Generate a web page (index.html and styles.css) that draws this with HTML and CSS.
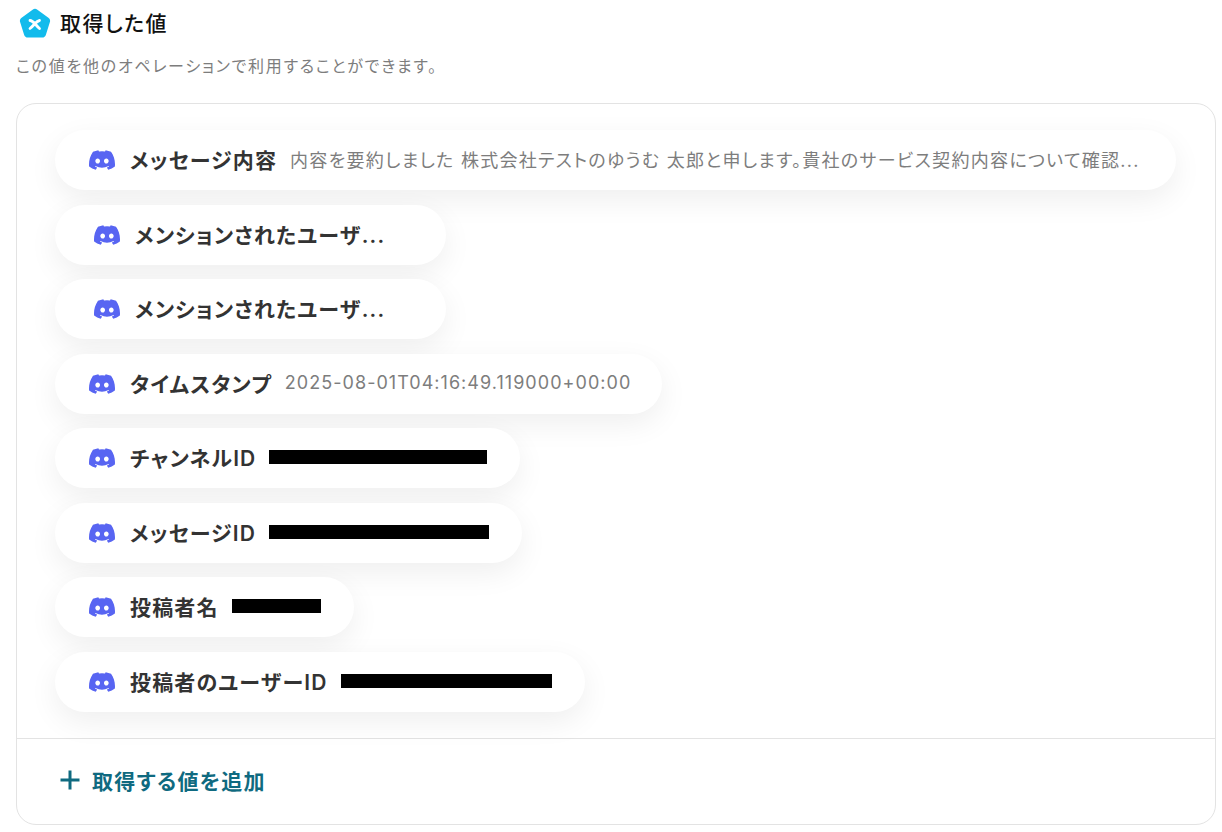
FILE: index.html
```html
<!DOCTYPE html>
<html lang="ja">
<head>
<meta charset="utf-8">
<title>取得した値</title>
<link rel="stylesheet" href="styles.css">
</head>
<body>
<svg class="defs" width="0" height="0" aria-hidden="true">
  <symbol id="discord" viewBox="0 0 127.14 96.36">
    <path fill="#5865f2" d="M107.7 8.07A105.15 105.15 0 0 0 81.47 0a72.06 72.06 0 0 0-3.36 6.83 97.68 97.68 0 0 0-29.11 0A72.37 72.37 0 0 0 45.64 0a105.89 105.89 0 0 0-26.25 8.09C2.79 32.65-1.71 56.6.54 80.21a105.73 105.73 0 0 0 32.17 16.15 77.7 77.7 0 0 0 6.89-11.11 68.42 68.42 0 0 1-10.85-5.18c.91-.66 1.8-1.34 2.66-2a75.57 75.57 0 0 0 64.32 0c.87.71 1.76 1.39 2.66 2a68.68 68.68 0 0 1-10.87 5.19 77 77 0 0 0 6.89 11.1 105.25 105.25 0 0 0 32.19-16.14c2.64-27.38-4.51-51.11-18.9-72.15ZM42.45 65.69C36.18 65.69 31 60 31 53s5-12.74 11.43-12.74S54 46 53.89 53s-5.05 12.69-11.44 12.69Zm42.24 0C78.41 65.69 73.25 60 73.25 53s5-12.74 11.44-12.74S96.23 46 96.12 53s-5.04 12.69-11.43 12.69Z"/>
  </symbol>
</svg>
<main class="page">
  <header class="heading">
    <svg class="logo" viewBox="0 0 32 32" aria-hidden="true">
      <path fill="#12bbec" d="M13.6 1.7a4 4 0 0 1 4.8 0l11 8a4 4 0 0 1 1.5 4.4l-4 12.600a4 4 0 0 1-3.900 2.800H9a4 4 0 0 1-3.900-2.800l-4-12.600a4 4 0 0 1 1.500-4.400Z"/>
      <path fill="none" stroke="#fff" stroke-width="2.8" stroke-linecap="round" d="M11 12.500c3.500 .2 5 4 9.500 8M20.500 12.500c-3.500 .5-4.500 4-9.500 8"/>
    </svg>
    <h1 class="title">取得した値</h1>
  </header>
  <p class="note">この値を他のオペレーションで利用することができます。</p>
  <section class="card">
    <ul class="pills">
      <li class="pill pill-full">
        <svg class="icon"><use href="#discord"/></svg>
        <span class="label">メッセージ内容</span>
        <span class="value value-long">内容を要約しました 株式会社テストのゆうむ 太郎と申します。貴社のサービス契約内容について確認...</span>
      </li>
      <li class="pill pill-short">
        <svg class="icon"><use href="#discord"/></svg>
        <span class="label">メンションされたユーザ...</span>
      </li>
      <li class="pill pill-short">
        <svg class="icon"><use href="#discord"/></svg>
        <span class="label">メンションされたユーザ...</span>
      </li>
      <li class="pill">
        <svg class="icon"><use href="#discord"/></svg>
        <span class="label">タイムスタンプ</span>
        <span class="value">2025-08-01T04:16:49.119000+00:00</span>
      </li>
      <li class="pill">
        <svg class="icon"><use href="#discord"/></svg>
        <span class="label">チャンネルID</span>
        <span class="redact redact-channel"></span>
      </li>
      <li class="pill">
        <svg class="icon"><use href="#discord"/></svg>
        <span class="label">メッセージID</span>
        <span class="redact redact-message"></span>
      </li>
      <li class="pill">
        <svg class="icon"><use href="#discord"/></svg>
        <span class="label">投稿者名</span>
        <span class="redact redact-author"></span>
      </li>
      <li class="pill">
        <svg class="icon"><use href="#discord"/></svg>
        <span class="label">投稿者のユーザーID</span>
        <span class="redact redact-user"></span>
      </li>
    </ul>
    <footer class="card-foot">
      <svg class="plus" viewBox="0 0 20 20" aria-hidden="true">
        <path fill="none" stroke="#0f6a80" stroke-width="3" d="M10 0.500V19.500M0.500 10H19.500"/>
      </svg>
      <span class="add">取得する値を追加</span>
    </footer>
  </section>
</main>
</body>
</html>
```

FILE: styles.css
```css
* { box-sizing: border-box; }
html, body { margin: 0; padding: 0; background: #fff; }
body {
  width: 1222px;
  height: 832px;
  overflow: hidden;
  font-family: "Inter", "Noto Sans CJK JP", sans-serif;
  font-feature-settings: "palt";
  color: #2b2b2b;
}
.defs { position: absolute; }
.page { padding: 8px 6px 0 16px; }
.heading { display: flex; align-items: center; gap: 9px; height: 32px; margin-left: 3px; }
.logo { width: 32px; height: 32px; flex: none; }
.title { margin: 0; font-size: 21px; font-weight: 500; letter-spacing: 1.4px; color: #111; line-height: 32px; }
.note { margin: 15px 0 0 0; font-size: 16px; letter-spacing: 1.74px; line-height: 22px; color: #7d7d7d; }
.card {
  margin-top: 26px;
  width: 1200px;
  height: 722px;
  border: 1px solid #e3e3e3;
  border-radius: 20px;
  background: #fff;
  overflow: hidden;
}
.pills {
  list-style: none;
  margin: 0;
  padding: 26px 0 0 38px;
  height: 634px;
  display: flex;
  flex-direction: column;
  align-items: flex-start;
  gap: 14.5px;
}
.pill {
  display: flex;
  align-items: center;
  height: 60px;
  flex: none;
  padding: 0 33px 0 34px;
  border-radius: 30px;
  background: #fff;
  box-shadow: 0 10px 30px rgba(0, 0, 0, 0.065);
}
.pill-full { width: 1121px; }
.pill-short { width: 391px; padding-left: 39px; }
.icon { width: 26px; height: 20px; flex: none; }
.label {
  margin-left: 15px;
  padding-bottom: 2px;
  font-size: 21px;
  font-weight: 600;
  letter-spacing: 1.15px;
  color: #333;
  white-space: nowrap;
}
.value {
  margin: 0 -2px 0 13px;
  padding-bottom: 2px;
  font-size: 18px;
  color: #7d7d7d;
  white-space: nowrap;
  letter-spacing: 1.04px;
}
.value-long { letter-spacing: 1.3px; }
.redact { display: block; height: 14px; margin: 0 0 2px 13px; background: #000; }
.redact-channel { width: 218px; }
.redact-message { width: 220px; }
.redact-author { width: 89px; }
.redact-user { width: 211px; }
.card-foot {
  display: flex;
  align-items: center;
  gap: 12px;
  height: 86px;
  padding-left: 43px;
  padding-bottom: 3px;
  border-top: 1px solid #e3e3e3;
}
.plus { width: 20px; height: 20px; flex: none; }
.add { font-size: 21px; font-weight: 600; color: #0f6a80; letter-spacing: 1.3px; }
```
